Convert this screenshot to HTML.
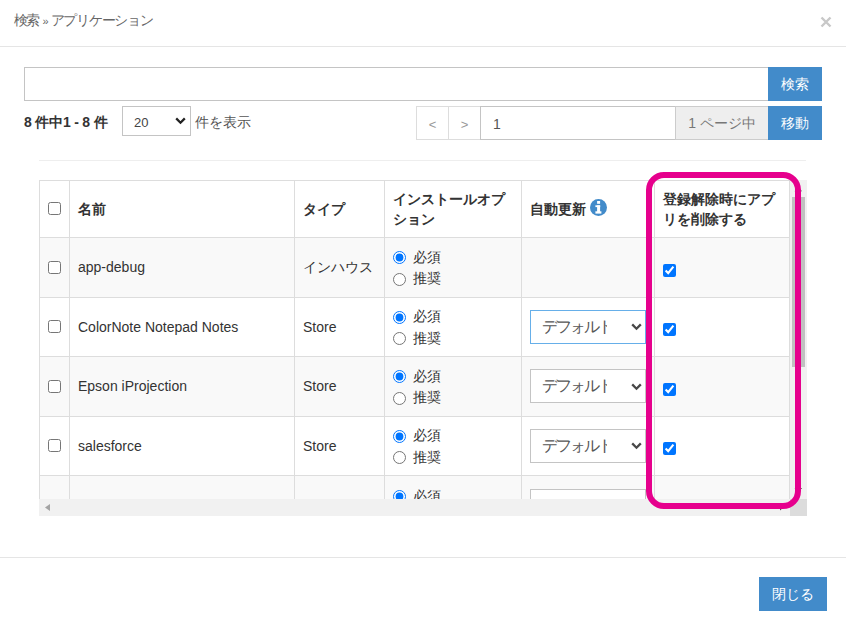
<!DOCTYPE html>
<html lang="ja">
<head>
<meta charset="utf-8">
<style>
*{box-sizing:border-box;}
html,body{margin:0;padding:0;}
body{width:846px;height:627px;overflow:hidden;background:#fff;position:relative;font-family:"Liberation Sans",sans-serif;font-size:14px;line-height:20px;color:#333;}
.abs{position:absolute;}
.title{left:14px;top:10px;color:#666;font-size:14px;line-height:20px;white-space:nowrap;}
.close{left:819px;top:15px;width:14px;height:14px;}
.hline{height:1px;background:#e5e5e5;}
.inp{border:1px solid #c4c4c4;background:#fff;}
.btn{background:#428bca;color:#fff;text-align:center;font-size:14px;}
.count{left:24px;top:112px;font-weight:bold;color:#333;white-space:nowrap;letter-spacing:-0.2px;}
.sel{border:1px solid #c4c4c4;background:#fff;}
.pg{border:1px solid #ddd;color:#999;text-align:center;background:#fff;}
.addon{background:#eee;border:1px solid #ccc;color:#777;text-align:center;}
.scroll{left:39px;top:180px;width:768px;height:336px;overflow:hidden;}
table{border-collapse:collapse;position:absolute;left:0;top:0;table-layout:fixed;}
td,th{border:1px solid #ddd;padding:0 8px;vertical-align:middle;text-align:left;white-space:nowrap;}
th{font-weight:bold;height:57px;line-height:20px;white-space:normal;}
tr.odd td{background:#f9f9f9;}
tr.even td{background:#fff;}
td{height:59.5px;}
.cb{width:13px;height:13px;margin:0;display:block;}
.radio{display:block;position:relative;height:21.5px;line-height:21.5px;padding-left:20px;top:1px;}
.radio input{position:absolute;left:0;top:4.5px;width:13px;height:13px;margin:0;}
.dsel{position:relative;width:116px;height:34px;border:1px solid #c4c4c4;background:#fff;overflow:hidden;color:#555;font-size:16px;line-height:32px;padding-left:11px;white-space:nowrap;}
.dsel .t{display:block;width:65px;overflow:hidden;letter-spacing:-2px;}
.dsel svg{position:absolute;left:99.5px;top:12.5px;}
.vs{left:751px;top:0;width:17px;height:319px;background:#f1f1f1;}
.hs{left:0;top:319px;width:751px;height:17px;background:#f1f1f1;}
.corner{left:751px;top:319px;width:17px;height:17px;background:#dcdcdc;}
.pink{left:646px;top:172px;width:155px;height:337px;border:6px solid #e6008d;border-radius:18px;}
</style>
</head>
<body>
<div class="abs title"><span style="letter-spacing:-1.8px">検索</span><span style="font-size:11px;margin-left:4px;margin-right:2px">»</span><span style="letter-spacing:-1.25px">アプリケーション</span></div>
<svg class="abs close" viewBox="0 0 14 14"><path d="M2.5 2.5L11.5 11.5M11.5 2.5L2.5 11.5" stroke="#c8c8c8" stroke-width="2.4"/></svg>
<div class="abs hline" style="left:0;top:46px;width:846px;"></div>

<div class="abs inp" style="left:24px;top:67px;width:745px;height:34px;"></div>
<div class="abs btn" style="left:768px;top:67px;width:54px;height:34px;line-height:34px;">検索</div>

<div class="abs count">8 件中1 - 8 件</div>
<div class="abs sel" style="left:122px;top:106px;width:69px;height:30px;">
  <span class="abs" style="left:11px;top:5.5px;font-size:13px;color:#444;">20</span>
  <svg class="abs" style="left:51.8px;top:9.8px;" width="11" height="8" viewBox="0 0 11 8"><path d="M1.2 1.4L5.5 5.7L9.8 1.4" fill="none" stroke="#222" stroke-width="2.3"/></svg>
</div>
<div class="abs" style="left:195px;top:112px;color:#555;white-space:nowrap;">件を表示</div>

<div class="abs pg" style="left:416px;top:106px;width:33px;height:34px;line-height:35px;font-size:13px;">&lt;</div>
<div class="abs pg" style="left:448px;top:106px;width:33px;height:34px;line-height:35px;font-size:13px;">&gt;</div>
<div class="abs inp" style="left:480px;top:106px;width:196px;height:34px;line-height:35px;padding-left:12px;color:#555;">1</div>
<div class="abs addon" style="left:675px;top:106px;width:94px;height:34px;line-height:32px;border-left:1px solid #ccc;">1 ページ中</div>
<div class="abs btn" style="left:768px;top:106px;width:54px;height:34px;line-height:34px;">移動</div>

<div class="abs hline" style="left:39px;top:160px;width:767px;background:#eee;"></div>

<div class="abs scroll">
<table>
<colgroup><col style="width:30px"><col style="width:225px"><col style="width:90px"><col style="width:137px"><col style="width:133px"><col style="width:135px"></colgroup>
<tr>
 <th><input type="checkbox" class="cb" style="position:relative;top:-0.8px"></th>
 <th>名前</th>
 <th>タイプ</th>
 <th>インストールオプション</th>
 <th>自動更新 <svg width="17" height="17" viewBox="0 0 17 17" style="vertical-align:-2px"><circle cx="8.5" cy="8.5" r="8.5" fill="#428bca"/><rect x="7.1" y="2" width="3" height="2.8" fill="#fff"/><rect x="5.4" y="6.3" width="4.8" height="1.8" fill="#fff"/><rect x="7.1" y="6.3" width="3" height="7" fill="#fff"/><rect x="5.4" y="12.3" width="6" height="2.3" fill="#fff"/></svg></th>
 <th>登録解除時にアプリを削除する</th>
</tr>
<tr class="odd">
 <td><input type="checkbox" class="cb"></td>
 <td>app-debug</td>
 <td>インハウス</td>
 <td><label class="radio"><input type="radio" name="r1" checked>必須</label><label class="radio"><input type="radio" name="r1">推奨</label></td>
 <td></td>
 <td><input type="checkbox" class="cb" checked style="position:relative;top:3px"></td>
</tr>
<tr class="even">
 <td><input type="checkbox" class="cb"></td>
 <td>ColorNote Notepad Notes</td>
 <td>Store</td>
 <td><label class="radio"><input type="radio" name="r2" checked>必須</label><label class="radio"><input type="radio" name="r2">推奨</label></td>
 <td><div class="dsel" style="border-color:#66afe9"><span class="t">デフォルト</span><svg width="11" height="8" viewBox="0 0 11 8"><path d="M1.2 1.4L5.5 5.7L9.8 1.4" fill="none" stroke="#484848" stroke-width="2.3"/></svg></div></td>
 <td><input type="checkbox" class="cb" checked style="position:relative;top:3px"></td>
</tr>
<tr class="odd">
 <td><input type="checkbox" class="cb"></td>
 <td>Epson iProjection</td>
 <td>Store</td>
 <td><label class="radio"><input type="radio" name="r3" checked>必須</label><label class="radio"><input type="radio" name="r3">推奨</label></td>
 <td><div class="dsel"><span class="t">デフォルト</span><svg width="11" height="8" viewBox="0 0 11 8"><path d="M1.2 1.4L5.5 5.7L9.8 1.4" fill="none" stroke="#484848" stroke-width="2.3"/></svg></div></td>
 <td><input type="checkbox" class="cb" checked style="position:relative;top:3px"></td>
</tr>
<tr class="even">
 <td><input type="checkbox" class="cb"></td>
 <td>salesforce</td>
 <td>Store</td>
 <td><label class="radio"><input type="radio" name="r4" checked>必須</label><label class="radio"><input type="radio" name="r4">推奨</label></td>
 <td><div class="dsel"><span class="t">デフォルト</span><svg width="11" height="8" viewBox="0 0 11 8"><path d="M1.2 1.4L5.5 5.7L9.8 1.4" fill="none" stroke="#484848" stroke-width="2.3"/></svg></div></td>
 <td><input type="checkbox" class="cb" checked style="position:relative;top:3px"></td>
</tr>
<tr class="odd">
 <td><input type="checkbox" class="cb"></td>
 <td></td>
 <td>Store</td>
 <td><div style="position:relative;top:1.2px"><label class="radio"><input type="radio" name="r5" checked>必須</label><label class="radio"><input type="radio" name="r5">推奨</label></div></td>
 <td><div class="dsel" style="position:relative;top:1px"></div></td>
 <td><input type="checkbox" class="cb" checked style="position:relative;top:3px"></td>
</tr>
</table>
<div class="abs vs"><div class="abs" style="left:2px;top:17px;width:13px;height:170px;background:#c1c1c1;"></div></div>
<div class="abs hs"><svg class="abs" style="left:6px;top:5px;" width="5" height="7" viewBox="0 0 5 7"><path d="M5 0L0 3.5L5 7Z" fill="#a3a3a3"/></svg></div>
<div class="abs corner"></div>
<svg class="abs" style="left:0;top:0" width="768" height="336" viewBox="0 0 768 336"><path d="M755.5 11.2L763.2 11.2L759.3 7.4Z M755.5 308L763.2 308L759.3 311.8Z M741 323.5L741 330.5L745 327Z" fill="#505050"/></svg>
</div>

<div class="abs pink"></div>

<div class="abs hline" style="left:0;top:557px;width:846px;"></div>
<div class="abs btn" style="left:759px;top:577px;width:68px;height:34px;line-height:34px;">閉じる</div>
</body>
</html>
